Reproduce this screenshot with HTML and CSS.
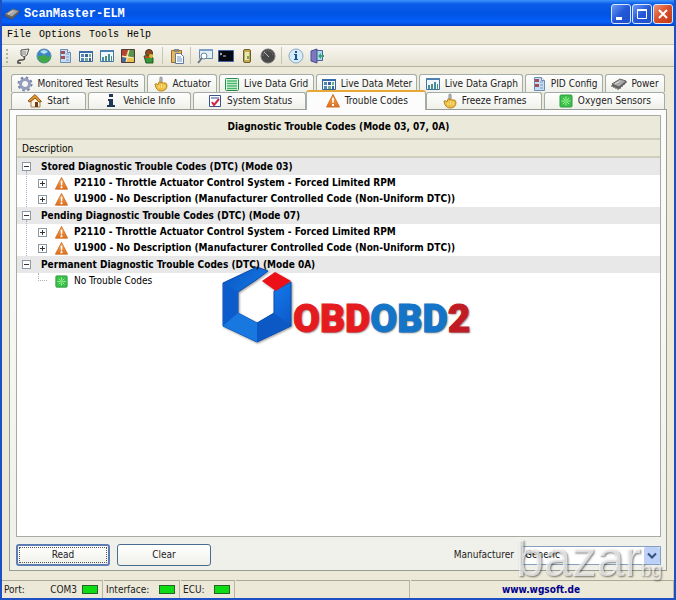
FILE: index.html
```
<!DOCTYPE html>
<html lang="en">
<head>
    <meta charset="UTF-8">
    <meta name="viewport" content="width=device-width, initial-scale=1.0">
    <title>ScanMaster-ELM</title>
    <link rel="stylesheet" href="styles.css">
</head>
<body>
    <!-- Shared icons -->
    <svg class="sprite" width="0" height="0" aria-hidden="true">
        <defs>
            <linearGradient id="gOrange" x1="0" y1="0" x2="0" y2="1">
                <stop offset="0" stop-color="#f7b060"/>
                <stop offset="1" stop-color="#dc6c1c"/>
            </linearGradient>
            <linearGradient id="gBlue" x1="0" y1="0" x2="1" y2="1">
                <stop offset="0" stop-color="#0a56c0"/>
                <stop offset="0.5" stop-color="#1478e8"/>
                <stop offset="1" stop-color="#0a50c0"/>
            </linearGradient>
        </defs>
        <symbol id="warning" viewBox="0 0 16 16">
            <path d="M8 1.5 14.5 14h-13z" fill="url(#gOrange)" stroke="#d0722a" stroke-linejoin="round"/>
            <path d="M7 5h2l-.4 5H7.4zM7 11h2v2H7z" fill="#fff"/>
        </symbol>
        <symbol id="green" viewBox="0 0 16 16">
            <rect x="2" y="2" width="12" height="12" rx="1" fill="#3cc04c" stroke="#2c9c3c"/>
            <path d="M8 3.5v9M3.5 8h9M5 5l6 6M11 5l-6 6" stroke="#a4f09c"/>
            <circle cx="8" cy="8" r="2" fill="#6ce06c"/>
        </symbol>
        <symbol id="chip" viewBox="0 0 16 16">
            <path d="M1 9v2M3 10v2M5 11v2M7 12v2M9 11v2M11 9v2M13 7v2M15 5v2" stroke="#444"/>
            <path d="M1 8 9 3l6 2-7 6z" fill="#a8a8a8" stroke="#666"/>
            <path d="M1 8v2l7 3 7-6V5l-7 6z" fill="#606060"/>
            <path d="m4 8 5-3" stroke="#ddd"/>
        </symbol>
        <symbol id="gear" viewBox="0 0 16 16">
            <circle cx="8" cy="8" r="6.5" fill="none" stroke="#7480a4" stroke-width="2" stroke-dasharray="2.5 2.6"/>
            <circle cx="8" cy="8" r="4.5" fill="none" stroke="#949cbc" stroke-width="3"/>
        </symbol>
        <symbol id="hand" viewBox="0 0 16 16">
            <path d="M7 2q0-1 1-1t1 1v6H7z" fill="#ccc" stroke="#888"/>
            <path d="M2 8q2-1 3 1l1-3q2-1 2 1 2-1 2.500 0Q13 6 14 9q0 6-6 6-5 0-6-7z" fill="#ecc044" stroke="#b88420"/>
            <path d="M6 9v3M8.500 8v4M11 9v3" stroke="#fce48c"/>
        </symbol>
        <symbol id="grid" viewBox="0 0 16 16">
            <rect x="1.500" y="2.500" width="13" height="12" rx="1" fill="#dff6e4" stroke="#2c8c50"/>
            <path d="M3 5h10M3 7.500h10M3 10h10M3 12.500h10" stroke="#48b868" stroke-width="1.500"/>
        </symbol>
        <symbol id="meter" viewBox="0 0 16 16">
            <path d="M1.500 3.500h13v10h-13z" fill="#f4f8fc" stroke="#386498"/>
            <path d="M1 3h14v2H1z" fill="#386ca8"/>
            <path d="M3 6h3v3H3zM3 10h3v3H3z" fill="#5488b4"/>
            <path d="M7 6h3v3H7zM11 10h2v3h-2z" fill="#386498"/>
            <path d="M11 6h2v3h-2zM7 10h3v3H7z" fill="#74ac90"/>
        </symbol>
        <symbol id="graph" viewBox="0 0 16 16">
            <path d="M1.500 2.500h13v11h-13z" fill="#f0f6fa" stroke="#4474a0"/>
            <path d="M1 2h14v2H1z" fill="#4c80b0"/>
            <path d="M3 9h2v4H3zM9 6h2v7H9z" fill="#448cac"/>
            <path d="M6 8h2v5H6zM12 8h1v5h-1z" fill="#54906c"/>
        </symbol>
        <symbol id="pid" viewBox="0 0 16 16">
            <path d="M3.500 1.500h7l3 3v10h-10z" fill="#c4dcf4" stroke="#6c8cb4"/>
            <path d="M10.500 1.500v3h3" fill="#fff" stroke="#6c8cb4"/>
            <path d="M4 3h4v3H4zM4 8h4v3H4z" fill="#a84c54"/>
            <path d="M9 6h3M9 9h3M9 12h3" stroke="#7c9cc4"/>
        </symbol>
        <symbol id="home" viewBox="0 0 16 16">
            <path d="M4 8v6h9V8L9 4z" fill="#fff4d8" stroke="#a08450"/>
            <path d="M1 8 8 1.500l6.500 7L12 9 8 5 3 9z" fill="#e09828" stroke="#90541c"/>
            <path d="M8 9h3v5H8z" fill="#684020"/>
        </symbol>
        <symbol id="info" viewBox="0 0 16 16">
            <path d="M6 1h4v3H6zM5 6h5v6h2v2H4v-2h2V8H5z" fill="#203458"/>
        </symbol>
        <symbol id="status" viewBox="0 0 16 16">
            <path d="M2.500 2.500h11v11h-11z" fill="#fff" stroke="#3c5488"/>
            <path d="M4 4h8v2H4z" fill="#94a8cc"/>
            <path d="m5 9 2 3 5-6" fill="none" stroke="#d02848" stroke-width="2"/>
        </symbol>
        <symbol id="plug" viewBox="0 0 16 16">
            <path d="M6 2 14 1l-2 6-3 2-3-2z" fill="#e4e4dc" stroke="#555"/>
            <path d="M8 3v4M10 3v4" stroke="#888"/>
            <path d="M9 9q2 3-3 3-4 0-3 3h3" fill="none" stroke="#444" stroke-width="1.500"/>
        </symbol>
        <symbol id="globe" viewBox="0 0 16 16">
            <circle cx="8" cy="8" r="7" fill="#3c84cc" stroke="#5c8cac"/>
            <path d="M2 8h4l2-2 3 3 4-1q-1 7-7 7T2 8z" fill="#40a844"/>
            <path d="M4 4q4-4 8 0L8 6z" fill="#b4e0f4"/>
        </symbol>
        <symbol id="map" viewBox="0 0 16 16">
            <path d="M1.500 1.500h13v13h-13z" fill="#e8c04c" stroke="#503c34"/>
            <path d="M2 2h6L6 8H2z" fill="#b44438"/>
            <path d="m9 2-2 6 7 2V2z" fill="#58944c"/>
            <path d="m2 9 5 1-1 4H2z" fill="#4468a4"/>
            <path d="m9 2-3 12M2 8l12 2" stroke="#fff4c8"/>
        </symbol>
        <symbol id="user" viewBox="0 0 16 16">
            <circle cx="8" cy="5" r="3.500" fill="#904c20" stroke="#48301c"/>
            <path d="M3 8q7-1 9 2v5H5z" fill="#389434" stroke="#205c24"/>
            <circle cx="10" cy="8" r="2" fill="#e4b82c"/>
            <path d="M4 8h4v2H4z" fill="#c83c28"/>
        </symbol>
        <symbol id="paste" viewBox="0 0 16 16">
            <path d="M2.500 2.500h10v12h-10z" fill="#e8b858" stroke="#986c28"/>
            <path d="M5 1h5v3H5z" fill="#888"/>
            <path d="M6.500 5.500h5l3 3v7h-8z" fill="#fff" stroke="#5c78a4"/>
            <path d="M8 9h4M8 11h5M8 13h5" stroke="#6c90c4"/>
        </symbol>
        <symbol id="find" viewBox="0 0 16 16">
            <path d="M2.500 1.500h13v9h-13z" fill="#e0f0fc" stroke="#6888a8"/>
            <path d="M2 1h14v2H2z" fill="#7ca0c4"/>
            <circle cx="7" cy="8" r="3" fill="#fff" stroke="#688498"/>
            <path d="m5 10-4 5" stroke="#687888" stroke-width="2"/>
        </symbol>
        <symbol id="console" viewBox="0 0 16 16">
            <path d="M.5 2.500h15v11H.5z" fill="#040810" stroke="#4464a0"/>
            <path d="m2 5 2 1-2 1M5 8h3" fill="none" stroke="#ccc"/>
        </symbol>
        <symbol id="device" viewBox="0 0 16 16">
            <rect x="4.500" y="1.500" width="7" height="13" rx="1.500" fill="#c8a84c" stroke="#705c28"/>
            <path d="M6 4h4v8H6z" fill="#dcecb8"/>
            <path d="M8 8h2v3H8z" fill="#8c9c58"/>
        </symbol>
        <symbol id="gauge" viewBox="0 0 16 16">
            <circle cx="8" cy="8" r="7" fill="#484848" stroke="#707070"/>
            <path d="M3 8q0-5 5-5 5 0 5 5" fill="none" stroke="#888" stroke-dasharray="1 1"/>
            <path d="m4 4 5 5" stroke="#c4c4c4"/>
        </symbol>
        <symbol id="about" viewBox="0 0 16 16">
            <circle cx="8" cy="8" r="7" fill="#d8ecf8" stroke="#88a8c4"/>
            <path d="M7 3h2v2H7zM6 6h3v5h1v1H6v-1h1V7H6z" fill="#145498"/>
        </symbol>
        <symbol id="exit" viewBox="0 0 16 16">
            <path d="M5.500 2.500h8v10h-8z" fill="#a8e0e4" stroke="#545ca4"/>
            <path d="m2 3 6-2v14l-6-2z" fill="#7c78c0" stroke="#484c90"/>
            <path d="m9 8 3-3v2h3v2h-3v2z" fill="#3ca084"/>
        </symbol>
    </svg>

    <div class="window">
        <header class="titlebar">
            <svg class="icon"><use href="#chip"/></svg>
            <h1>ScanMaster-ELM</h1>
            <div class="window-buttons">
                <button type="button" aria-label="Minimize"><svg viewBox="0 0 18 18"><path d="M4 12h6v3H4z" fill="#fff"/></svg></button>
                <button type="button" aria-label="Maximize"><svg viewBox="0 0 18 18"><path d="M4.500 5v8.500h9V5" fill="none" stroke="#fff"/><path d="M4 4h10v2H4z" fill="#fff"/></svg></button>
                <button type="button" class="close" aria-label="Close"><svg viewBox="0 0 18 18"><path d="m5 5 8 8m0-8-8 8" stroke="#fff" stroke-width="2"/></svg></button>
            </div>
        </header>

        <nav class="menu">
            <button type="button">File</button>
            <button type="button">Options</button>
            <button type="button">Tools</button>
            <button type="button">Help</button>
        </nav>

        <div class="toolbar">
            <button type="button" aria-label="Connect"><svg class="icon"><use href="#plug"/></svg></button>
            <button type="button" aria-label="Web"><svg class="icon"><use href="#globe"/></svg></button>
            <button type="button" aria-label="PID config"><svg class="icon"><use href="#pid"/></svg></button>
            <button type="button" aria-label="Meter"><svg class="icon"><use href="#meter"/></svg></button>
            <button type="button" aria-label="Graph"><svg class="icon"><use href="#graph"/></svg></button>
            <button type="button" aria-label="Map"><svg class="icon"><use href="#map"/></svg></button>
            <button type="button" aria-label="User"><svg class="icon"><use href="#user"/></svg></button>
            <span class="separator"></span>
            <button type="button" aria-label="Paste"><svg class="icon"><use href="#paste"/></svg></button>
            <span class="separator"></span>
            <button type="button" aria-label="Find"><svg class="icon"><use href="#find"/></svg></button>
            <button type="button" aria-label="Console"><svg class="icon"><use href="#console"/></svg></button>
            <button type="button" aria-label="Device"><svg class="icon"><use href="#device"/></svg></button>
            <button type="button" aria-label="Gauge"><svg class="icon"><use href="#gauge"/></svg></button>
            <span class="separator"></span>
            <button type="button" aria-label="About"><svg class="icon"><use href="#about"/></svg></button>
            <button type="button" aria-label="Exit"><svg class="icon"><use href="#exit"/></svg></button>
        </div>

        <main class="content">
            <div class="tabs tabs-back">
                <button type="button" class="tab"><svg class="icon"><use href="#gear"/></svg>Monitored Test Results</button>
                <button type="button" class="tab"><svg class="icon"><use href="#hand"/></svg>Actuator</button>
                <button type="button" class="tab"><svg class="icon"><use href="#grid"/></svg>Live Data Grid</button>
                <button type="button" class="tab"><svg class="icon"><use href="#meter"/></svg>Live Data Meter</button>
                <button type="button" class="tab"><svg class="icon"><use href="#graph"/></svg>Live Data Graph</button>
                <button type="button" class="tab"><svg class="icon"><use href="#pid"/></svg>PID Config</button>
                <button type="button" class="tab"><svg class="icon"><use href="#chip"/></svg>Power</button>
            </div>
            <div class="tabs tabs-front">
                <button type="button" class="tab"><svg class="icon"><use href="#home"/></svg>Start</button>
                <button type="button" class="tab"><svg class="icon"><use href="#info"/></svg>Vehicle Info</button>
                <button type="button" class="tab"><svg class="icon"><use href="#status"/></svg>System Status</button>
                <button type="button" class="tab active"><svg class="icon"><use href="#warning"/></svg>Trouble Codes</button>
                <button type="button" class="tab"><svg class="icon"><use href="#hand"/></svg>Freeze Frames</button>
                <button type="button" class="tab"><svg class="icon"><use href="#green"/></svg>Oxygen Sensors</button>
            </div>

            <section class="panel">
                <div class="codes">
                    <h2>Diagnostic Trouble Codes (Mode 03, 07, 0A)</h2>
                    <div class="column-head">Description</div>
                    <ul class="tree">
                        <li>
                            <div class="group"><button type="button" class="toggle minus" aria-label="Collapse"></button>Stored Diagnostic Trouble Codes (DTC) (Mode 03)</div>
                            <ul>
                                <li class="code"><button type="button" class="toggle plus" aria-label="Expand"></button><svg class="icon"><use href="#warning"/></svg>P2110 - Throttle Actuator Control System - Forced Limited RPM</li>
                                <li class="code"><button type="button" class="toggle plus" aria-label="Expand"></button><svg class="icon"><use href="#warning"/></svg>U1900 - No Description (Manufacturer Controlled Code (Non-Uniform DTC))</li>
                            </ul>
                        </li>
                        <li>
                            <div class="group"><button type="button" class="toggle minus" aria-label="Collapse"></button>Pending Diagnostic Trouble Codes (DTC) (Mode 07)</div>
                            <ul>
                                <li class="code"><button type="button" class="toggle plus" aria-label="Expand"></button><svg class="icon"><use href="#warning"/></svg>P2110 - Throttle Actuator Control System - Forced Limited RPM</li>
                                <li class="code"><button type="button" class="toggle plus" aria-label="Expand"></button><svg class="icon"><use href="#warning"/></svg>U1900 - No Description (Manufacturer Controlled Code (Non-Uniform DTC))</li>
                            </ul>
                        </li>
                        <li>
                            <div class="group"><button type="button" class="toggle minus" aria-label="Collapse"></button><span class="over">Permanent Diagnostic Trouble Codes (DTC) (Mode 0A)</span></div>
                            <ul>
                                <li class="code none"><span class="branch"></span><svg class="icon"><use href="#green"/></svg>No Trouble Codes</li>
                            </ul>
                        </li>
                    </ul>

                    <div class="logo">
                        <svg viewBox="0 0 72 78">
                            <path d="M47 6 36 2 2 18v43l34 16 34-16V17l-17 9v22L36 58 17 48V27l18-12z" fill="url(#gBlue)" stroke="#0a4cae"/>
                            <path d="M2 18 17 27v21L2 61z" fill="#0c5ccc"/>
                            <path d="m2 61 15-13 19 10v19z" fill="#1878e0"/>
                            <path d="M36 58 53 48l17 13-34 16z" fill="#0c58c4"/>
                            <path d="m41 16 13-9 16 9-15 10z" fill="#ec1018"/>
                        </svg>
                        <span class="logo-text"><span class="red">OBD</span><span class="blue">OBD</span><span class="dark-red">2</span></span>
                    </div>
                </div>

                <div class="actions">
                    <button type="button" class="btn focused">Read</button>
                    <button type="button" class="btn">Clear</button>
                    <label for="manufacturer">Manufacturer</label>
                    <div class="select">
                        <select id="manufacturer">
                            <option>Generic</option>
                        </select>
                        <svg viewBox="0 0 16 16"><path d="m4 6 4 4 4-4" fill="none" stroke="#34507c" stroke-width="2"/></svg>
                    </div>
                </div>
            </section>
        </main>

        <footer class="statusbar">
            <div class="cell"><span>Port:</span><span class="right">COM3</span><i class="led"></i></div>
            <div class="cell"><span>Interface:</span><i class="led right"></i></div>
            <div class="cell"><span>ECU:</span><i class="led right"></i></div>
            <div class="cell"></div>
            <div class="cell site"><a href="#">www.wgsoft.de</a></div>
        </footer>

        <div class="watermark">bazar<small>bg</small></div>
    </div>
</body>
</html>
```
FILE: styles.css
```
* {
    box-sizing: border-box;
}

body {
    margin: 0;
    font-family: "DejaVu Sans Condensed", "Liberation Sans", sans-serif;
    font-size: 10px;
    line-height: 16px;
    color: #222;
}

button,
select {
    font: inherit;
    color: inherit;
    padding: 0;
    margin: 0;
}

.sprite {
    position: absolute;
}

.icon {
    width: 16px;
    height: 16px;
    flex: none;
}

.window {
    position: relative;
    display: flex;
    flex-direction: column;
    min-height: 100vh;
    background: #ece9d8;
    border: solid #1c50c4;
    border-width: 0 2px 2px;
}

/* Title bar */
.titlebar {
    display: flex;
    align-items: center;
    gap: 4px;
    height: 26px;
    padding: 2px 0 0 2px;
    background: linear-gradient(#3c94fc 0, #0c5ce8 4px, #0054e4 14px, #0460fc 22px, #0040c4);
}

.titlebar h1 {
    margin: 0;
    font-family: "Liberation Mono", monospace;
    font-size: 12px;
    font-weight: bold;
    color: #fff;
}

.window-buttons {
    display: flex;
    gap: 1px;
    margin-left: auto;
    padding-right: 1px;
}

.window-buttons button {
    width: 20px;
    height: 20px;
    border: 1px solid #dce8fc;
    border-radius: 3px;
    background: linear-gradient(135deg, #6c9cf4, #2458d8 50%, #2050c8);
}

.window-buttons .close {
    background: linear-gradient(135deg, #ec9478, #d84c28 50%, #c03c18);
}

.window-buttons svg {
    display: block;
    width: 18px;
    height: 18px;
}

/* Menu and toolbar */
.menu {
    display: flex;
    gap: 8px;
    height: 18px;
    padding-left: 5px;
    font-family: "Liberation Mono", monospace;
}

.menu button {
    border: 0;
    background: none;
    color: #000;
}

.toolbar {
    display: flex;
    align-items: center;
    height: 23px;
    padding-left: 10px;
    border-top: 1px solid #c8c5b4;
    border-bottom: 1px solid #b4b1a2;
    background: linear-gradient(#f8f7f2, #e6e3d2);
    position: relative;
}

.toolbar::before {
    content: "";
    position: absolute;
    left: 4px;
    top: 4px;
    height: 14px;
    border-left: 2px dotted #b4b1a0;
}

.toolbar button {
    width: 21px;
    height: 20px;
    border: 0;
    background: none;
}

.toolbar .icon {
    display: block;
    margin: auto;
}

.separator {
    width: 1px;
    height: 17px;
    margin: 0 3px;
    background: #c8c5b4;
}

/* Tabs */
.content {
    flex: 1;
    display: flex;
    flex-direction: column;
    padding: 7px 7px 9px;
}

.tabs {
    display: grid;
    gap: 2px;
    padding: 0 2px;
}

.tabs-back {
    grid-template-columns: 134fr 70fr 95fr 102fr 104fr 78fr 60fr;
}

.tabs-front {
    grid-template-columns: 75fr 104fr 114fr 117fr 116fr 122fr;
}

.tab {
    display: flex;
    align-items: center;
    justify-content: center;
    gap: 4px;
    height: 18px;
    border: 1px solid #a4aca8;
    border-bottom: 0;
    border-radius: 3px 3px 0 0;
    background: linear-gradient(#fefefe, #f0f0ea);
    white-space: nowrap;
    min-width: 0;
}

.tabs-front .tab {
    height: 17px;
}

.tabs-front .active {
    height: 20px;
    margin: -2px -2px -1px;
    border-top: 2px solid #e8a838;
    background: #fcfcfc;
    position: relative;
}

/* Panel */
.panel {
    flex: 1;
    display: flex;
    flex-direction: column;
    border: 1px solid #989c94;
    background: linear-gradient(#fcfcfc, #f0f0ea);
    padding: 5px 5px 4px 6px;
}

.codes {
    flex: 1;
    border: 1px solid #a8aca0;
    background: #fff;
    color: #000;
    position: relative;
}

.codes h2 {
    margin: 0;
    font-size: 10px;
    line-height: 22px;
    text-align: center;
    background: #ebe9da;
    border-bottom: 2px solid #d0cebc;
}

.column-head {
    height: 18px;
    padding-left: 5px;
    line-height: 17px;
    background: #ebeada;
    border-bottom: 2px solid #d0cebc;
}

.tree,
.tree ul {
    list-style: none;
    margin: 0;
    padding: 0;
}

.tree > li {
    position: relative;
}

.group {
    display: flex;
    align-items: center;
    gap: 10px;
    height: 17px;
    padding-left: 5px;
    font-weight: bold;
    background: #e8e8e8;
}

/* Keeps the row text above the logo */
.over {
    position: relative;
    z-index: 1;
}

.code {
    display: flex;
    align-items: center;
    height: 16px;
    padding-left: 21px;
    font-weight: bold;
    white-space: nowrap;
}

.code .icon {
    width: 15px;
    height: 15px;
    margin: 0 5px 0 7px;
}

.none {
    font-weight: normal;
}

/* Dotted line between the group toggles */
.tree > li:not(:last-child)::after {
    content: "";
    position: absolute;
    left: 9px;
    top: 13px;
    bottom: -4px;
    border-left: 1px dotted #b0b0b0;
}

.branch {
    width: 9px;
    height: 8px;
    margin-bottom: 8px;
    border: dotted #b0b0b0;
    border-width: 0 0 1px 1px;
}

.toggle {
    flex: none;
    width: 9px;
    height: 9px;
    border: 1px solid #8c98a4;
    background: linear-gradient(#333, #333) center / 5px 1px no-repeat, #fff;
}

.plus {
    background: linear-gradient(#333, #333) center / 5px 1px no-repeat, linear-gradient(#333, #333) center / 1px 5px no-repeat, #fff;
}

/* Logo laid over the list */
.logo {
    position: absolute;
    left: 204px;
    top: 149px;
    display: flex;
    align-items: flex-end;
}

.logo svg {
    width: 72px;
    height: 78px;
    filter: drop-shadow(1px 1px 1px #999);
}

.logo-text {
    font-family: Roboto, sans-serif;
    font-size: 39px;
    font-weight: 900;
    line-height: 48px;
    text-shadow: 1px 1px 2px #777;
    -webkit-text-stroke: 1px;
}

.red {
    color: #e41c20;
}

.blue {
    color: #1474c8;
}

.dark-red {
    color: #c01c24;
}

/* Buttons under the list */
.actions {
    display: flex;
    align-items: center;
    gap: 7px;
    padding-top: 7px;
}

.btn {
    width: 94px;
    height: 22px;
    border: 1px solid #486c90;
    border-radius: 3px;
    background: linear-gradient(#fff, #f0f0ea);
}

.focused {
    border: 2px solid #5c7cb4;
    outline: 1px dotted #555;
    outline-offset: -4px;
}

.actions label {
    margin-left: auto;
}

.select {
    position: relative;
    width: 140px;
    height: 19px;
}

.select select {
    width: 100%;
    height: 19px;
    padding-left: 3px;
    border: 1px solid #84a0bc;
    border-radius: 0;
    background: #fff;
    appearance: none;
}

.select svg {
    position: absolute;
    right: 1px;
    top: 1px;
    width: 16px;
    height: 17px;
    background: #bcd0f8;
    border-radius: 2px;
    pointer-events: none;
}

/* Status bar */
.statusbar {
    display: grid;
    grid-template-columns: 101px 76px 54px 174px 1fr;
    gap: 1px;
    height: 18px;
}

.cell {
    display: flex;
    align-items: center;
    gap: 5px;
    padding: 0 4px 0 2px;
    border-top: 1px solid #aca998;
    border-right: 1px solid #b8b5a4;
}

.right {
    margin-left: auto;
}

.led {
    width: 16px;
    height: 9px;
    border: 1px solid #286428;
    background: #0cdc14;
}

.site {
    justify-content: center;
}

.site a {
    color: #00008c;
    font-weight: bold;
    text-decoration: none;
}

/* Watermark */
.watermark {
    position: absolute;
    right: 12px;
    bottom: 8px;
    font-family: "Liberation Sans", sans-serif;
    font-size: 50px;
    line-height: 40px;
    color: rgba(255, 255, 255, 0.7);
    text-shadow: 1px 1px 2px rgba(0, 0, 0, 0.5);
    pointer-events: none;
}

.watermark small {
    font-size: 19px;
}
```
